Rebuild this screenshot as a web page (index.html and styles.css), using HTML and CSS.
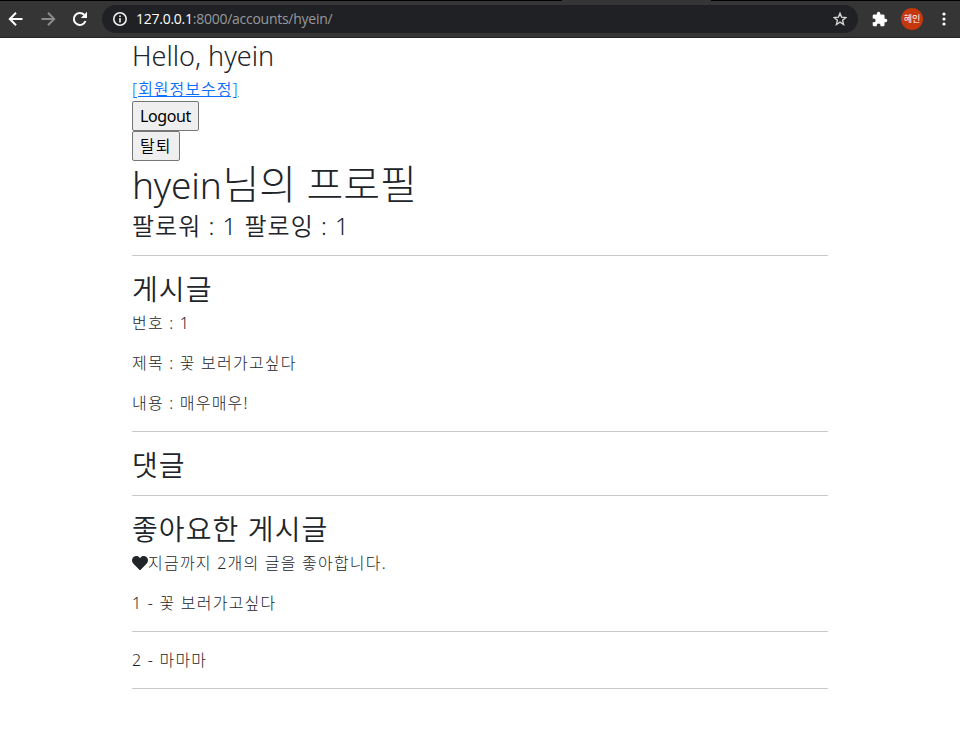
FILE: index.html
```html
<!DOCTYPE html>
<html lang="ko">
<head>
<meta charset="utf-8">
<title>hyein</title>
<link rel="stylesheet" href="styles.css">
</head>
<body>
<header class="toolbar">
  <svg class="nav back" width="16" height="16" viewBox="0 0 16 16"><path d="M14.5 8H2M8 1.8 1.8 8 8 14.2"/></svg>
  <svg class="nav forward" width="16" height="16" viewBox="0 0 16 16"><path d="M1.5 8H14M8 1.8 14.2 8 8 14.2"/></svg>
  <svg class="nav reload" width="16" height="16" viewBox="0 0 16 16"><path d="M13.5 10A6 6 0 1 1 12.2 3.8"/><path class="solid" d="M15 .8V7H8.8Z"/></svg>
  <div class="address">
    <svg class="info" width="14" height="14" viewBox="0 0 14 14"><circle cx="7" cy="7" r="6.2"/><path d="M7 6v4.4M7 3.4v1.7"/></svg>
    <span class="url"><b>127.0.0.1</b>:8000/accounts/hyein/</span>
    <svg class="star" width="14" height="14" viewBox="0 0 14 14"><path d="m7 1.2 1.6 4 4.3.3-3.3 2.8 1 4.2L7 10.2l-3.6 2.3 1-4.2L1.1 5.5l4.3-.3Z"/></svg>
  </div>
  <svg class="puzzle" width="16" height="16" viewBox="1 0 23 23"><path d="M20.5 11H19V7a2 2 0 0 0-2-2h-4V3.500a2.500 2.500 0 0 0-5 0V5H4a2 2 0 0 0-2 2v3.800h1.500a2.700 2.700 0 0 1 0 5.400H2V20a2 2 0 0 0 2 2h3.800v-1.500a2.700 2.700 0 0 1 5.400 0V22H17a2 2 0 0 0 2-2v-4h1.500a2.500 2.500 0 0 0 0-5Z"/></svg>
  <span class="avatar">혜인</span>
  <svg class="more" width="4" height="14" viewBox="0 0 4 14"><circle cx="2" cy="2" r="1.6"/><circle cx="2" cy="7" r="1.600"/><circle cx="2" cy="12" r="1.600"/></svg>
</header>
<main class="container">
  <h3 class="hello">Hello, hyein</h3>
  <div class="edit"><a href="#">[회원정보수정]</a></div>
  <button class="logout">Logout</button>
  <button class="leave">탈퇴</button>
  <h1 class="profile"><span class="name">hyein</span>님의 프로필</h1>
  <h4 class="follow">팔로워 : 1 팔로잉 : 1</h4>
  <hr>
  <h2>게시글</h2>
  <p>번호 : 1</p>
  <p>제목 : 꽃 보러가고싶다</p>
  <p>내용 : 매우매우!</p>
  <hr>
  <h2>댓글</h2>
  <hr>
  <h2>좋아요한 게시글</h2>
  <p class="likes"><svg class="heart" width="16" height="16" viewBox="0 0 512 512"><path d="M462.300 62.600C407.500 15.900 326 24.300 275.700 76.200L256 96.500l-19.700-20.300C186.100 24.300 104.500 15.900 49.700 62.600c-62.800 53.600-66.100 149.800-9.900 207.900l193.500 199.800c12.500 12.900 32.800 12.900 45.300 0l193.500-199.800c56.300-58.100 53-154.300-9.800-207.900Z"/></svg>지금까지 2개의 글을 좋아합니다.</p>
  <p class="item">1 - 꽃 보러가고싶다</p>
  <hr>
  <p class="item">2 - 마마마</p>
  <hr>
</main>
</body>
</html>
```
FILE: styles.css
```css
* { box-sizing: border-box; }
body {
  margin: 0;
  background: #fff;
  color: #212529;
  font-family: "Noto Sans", "Noto Sans CJK KR", sans-serif;
  font-size: 16px;
  line-height: 24px;
}
.toolbar {
  display: flex;
  align-items: center;
  height: 38px;
  padding: 0 13px 0 8px;
  background: linear-gradient(90deg, #000 562px, #353535 562px 711px, #000 711px) 0 0 / 100% 1px no-repeat, #353535;
  border-bottom: 1px solid #242424;
}
.nav { fill: none; stroke: #fff; stroke-width: 2; margin-right: 16px; }
.forward { stroke: #8a8a8a; }
.reload { margin-right: 14px; }
.reload .solid { fill: #fff; stroke: none; }
.address {
  display: flex;
  align-items: center;
  width: 756px;
  height: 28px;
  padding: 0 11px;
  border-radius: 14px;
  background: #202124;
}
.info { fill: none; stroke: #f1f1f1; stroke-width: 1.6; }
.url {
  flex: 1;
  margin-left: 9px;
  color: #969a9e;
  font-family: "Open Sans", sans-serif;
  font-size: 14px;
  letter-spacing: -0.26px;
}
.url b { color: #fff; font-weight: 400; }
.star { fill: none; stroke: #d5d5d5; stroke-width: 1.4; }
.puzzle { margin-left: 14px; fill: #fff; }
.avatar {
  width: 22px;
  height: 22px;
  margin: 0 19px 0 13px;
  border-radius: 50%;
  background: #c5370d;
  color: #fff;
  font-family: "Noto Sans CJK KR", sans-serif;
  font-size: 9px;
  line-height: 21px;
  text-align: center;
}
.more { fill: #fff; }
.container { width: 696px; margin: 0 auto; }
h1, h2, h3, h4, p { margin: 0; font-weight: 350; white-space: nowrap; }
.hello { height: 39px; font-size: 27px; line-height: 35px; letter-spacing: 0; }
.edit { height: 24px; font-weight: 350; letter-spacing: 1px; }
a { color: #0d6efd; }
button {
  display: block;
  height: 30px;
  padding: 0 7px;
  border: 1px solid #767676;
  border-radius: 2px;
  background: #efefef;
  color: #000;
  font: inherit;
  font-weight: 350;
  line-height: 28px;
  text-align: left;
}
.logout { width: 67px; font-weight: 400; letter-spacing: -0.4px; }
.leave { width: 48px; letter-spacing: 1px; }
.profile { height: 52px; font-size: 40px; line-height: 46px; font-weight: 300; }
.name { font-size: 37px; font-weight: 350; letter-spacing: -0.2px; margin-right: 1px; }
.follow { height: 42px; font-size: 24px; line-height: 25px; letter-spacing: 1px; }
hr { height: 1px; margin: 0 0 16px; border: 0; background: #c8c9ca; }
h2 { height: 39px; font-size: 28px; line-height: 34px; letter-spacing: 1.1px; }
h2 + hr { margin-top: 8px; }
p { height: 40px; font-weight: 300; letter-spacing: 1.22px; }
.heart { vertical-align: -2px; fill: #212529; }
```
